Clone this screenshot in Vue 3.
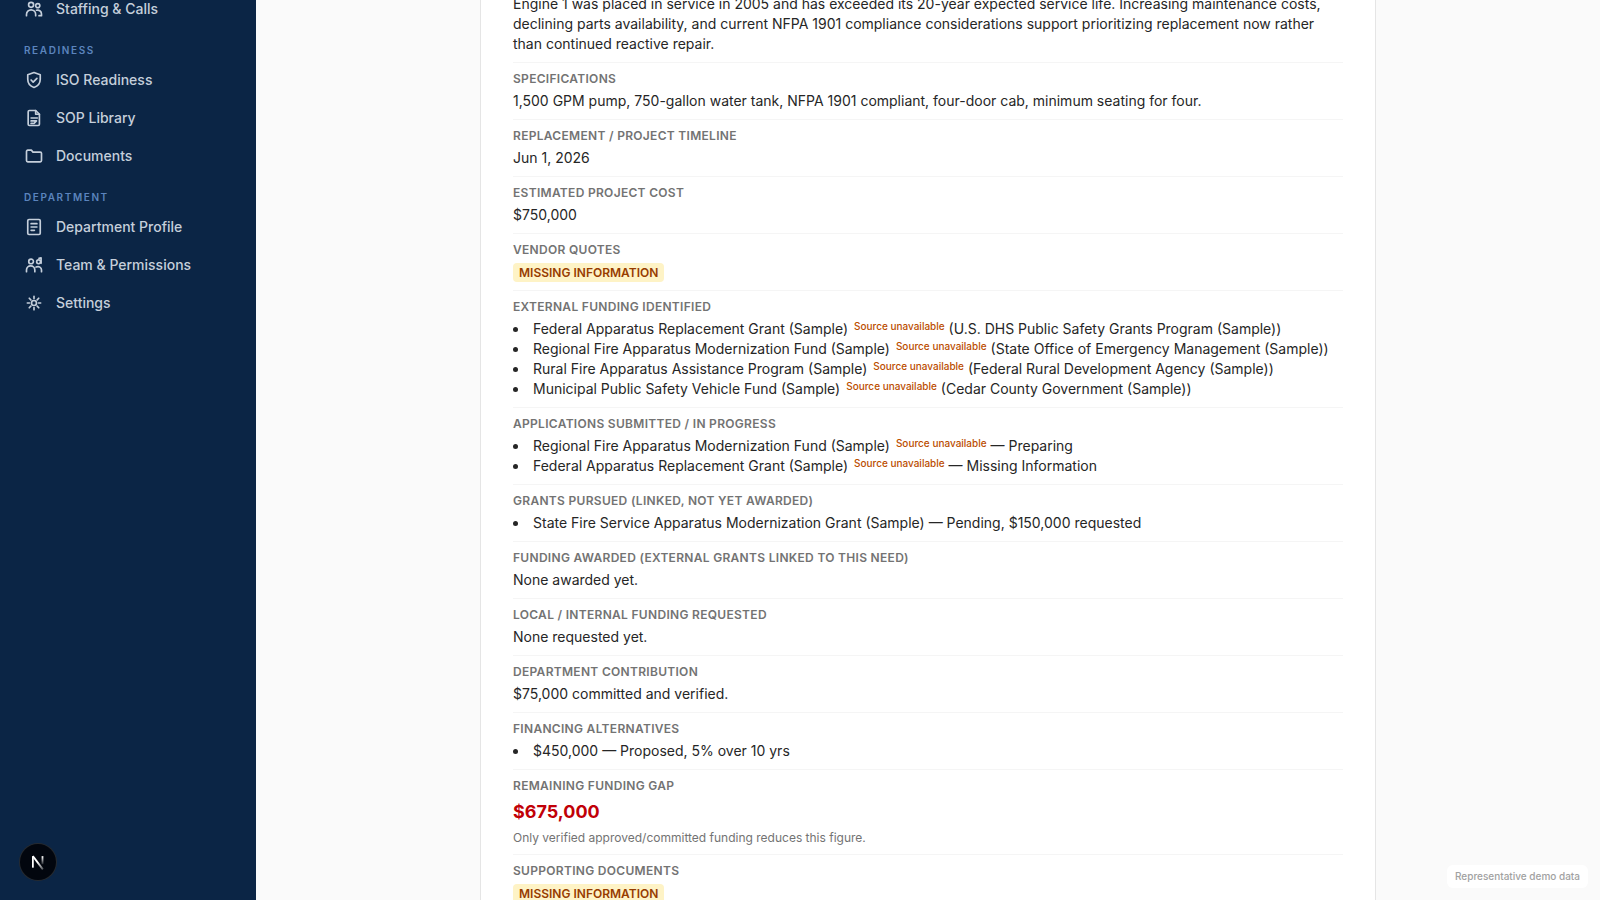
<template>
  <div class="shell">
    <aside class="sidebar">
      <nav class="nav">
        <div v-for="group in groups" :key="group.items[0].label" class="nav-group">
          <h2 v-if="group.title" class="nav-title">{{ group.title }}</h2>
          <a v-for="item in group.items" :key="item.label" href="#" class="nav-item">
            <svg class="nav-icon" viewBox="0 0 24 24" aria-hidden="true">
              <path v-for="d in item.icon" :key="d" :d="d" />
            </svg>
            <span>{{ item.label }}</span>
          </a>
        </div>
      </nav>
    </aside>

    <main class="main">
      <article class="report">
        <section v-for="(section, i) in sections" :key="i" class="section">
          <h3 v-if="section.title" class="section-title">{{ section.title }}</h3>
          <p v-if="section.text">{{ section.text }}</p>
          <p v-if="section.missing"><span class="missing">Missing Information</span></p>
          <ul v-if="section.list" class="list">
            <li v-for="row in section.list" :key="row.name">
              {{ row.name }}
              <sup v-if="row.unsourced" class="source">Source unavailable</sup>
              {{ row.detail }}
            </li>
          </ul>
          <p v-if="section.amount" class="amount">{{ section.amount }}</p>
          <p v-if="section.note" class="note">{{ section.note }}</p>
        </section>
      </article>
    </main>

    <button type="button" class="dev-button" aria-label="Open dev tools">
      <svg viewBox="0 0 40 40" aria-hidden="true">
        <defs>
          <linearGradient id="diagonal" x1="20" y1="20" x2="27" y2="29" gradientUnits="userSpaceOnUse">
            <stop stop-color="#fff" />
            <stop offset="1" stop-color="#fff" stop-opacity="0.2" />
          </linearGradient>
          <linearGradient id="stem" x1="26" y1="14" x2="26" y2="24" gradientUnits="userSpaceOnUse">
            <stop stop-color="#fff" />
            <stop offset="1" stop-color="#fff" stop-opacity="0" />
          </linearGradient>
        </defs>
        <path d="M14.3 26.3V13.5" stroke="#fff" />
        <path d="M14.3 13.5L25.4 28.2" stroke="url(#diagonal)" />
        <path d="M25 13.5V22.5" stroke="url(#stem)" />
      </svg>
    </button>
    <div class="demo-tag">Representative demo data</div>
  </div>
</template>

<script setup>
const groups = [
  {
    items: [
      {
        label: 'Staffing & Calls',
        icon: [
          'M8.5 10a3 3 0 1 0 0-6 3 3 0 0 0 0 6z',
          'M16.5 10.5a2.5 2.5 0 1 0 0-5 2.5 2.5 0 0 0 0 5z',
          'M3 20v-1.5a5.5 5.5 0 0 1 11 0V20',
          'M15 13.5c3.5-.6 6 1.5 6 4.5v2h-3',
        ],
      },
    ],
  },
  {
    title: 'Readiness',
    items: [
      {
        label: 'ISO Readiness',
        icon: ['M12 3l7.5 2.8v5.4c0 4.8-3 8.3-7.5 9.8-4.5-1.5-7.5-5-7.5-9.8V5.8z', 'M8.5 12l2.5 2.5 4.5-4.5'],
      },
      {
        label: 'SOP Library',
        icon: [
          'M6.5 3H14l4.5 4.5v12a1.5 1.5 0 0 1-1.5 1.5H6.5A1.5 1.5 0 0 1 5 19.5v-15A1.5 1.5 0 0 1 6.5 3z',
          'M14 3v4.5h4.5',
          'M8.5 12H16M8.5 15.5H15l-3 3M8.5 18.5h2',
        ],
      },
      {
        label: 'Documents',
        icon: ['M3 6.5A1.5 1.5 0 0 1 4.5 5h4.3l2 2.3h8.7A1.5 1.5 0 0 1 21 8.8v8.7a1.5 1.5 0 0 1-1.5 1.5h-15A1.5 1.5 0 0 1 3 17.5z'],
      },
    ],
  },
  {
    title: 'Department',
    items: [
      {
        label: 'Department Profile',
        icon: [
          'M6 3h12a1.5 1.5 0 0 1 1.5 1.5v15A1.5 1.5 0 0 1 18 21H6a1.5 1.5 0 0 1-1.5-1.5v-15A1.5 1.5 0 0 1 6 3z',
          'M8.5 8h7M8.5 12h7M8.5 16h4',
        ],
      },
      {
        label: 'Team & Permissions',
        icon: [
          'M8.5 10.5a2.8 2.8 0 1 0 0-5.6 2.8 2.8 0 0 0 0 5.6z',
          'M17.5 10.5a2.3 2.3 0 1 0 0-4.6 2.3 2.3 0 0 0 0 4.6z',
          'M3 20v-2a5 5 0 0 1 10 0v2',
          'M14.5 14.5c3.5-1.5 6.5.5 6.5 3.5v2',
          'M18 4l2.5-.5V10',
        ],
      },
      {
        label: 'Settings',
        icon: [
          'M12 15a3 3 0 1 0 0-6 3 3 0 0 0 0 6z',
          'M12 4v2.5M12 17.5V20M4 12h2.5M17.5 12H20M6.3 6.3l1.9 1.9M15.8 15.8l1.9 1.9M6.3 17.7l1.9-1.9M15.8 8.2l1.9-1.9',
        ],
      },
    ],
  },
]

const sections = [
  {
    text: 'Engine 1 was placed in service in 2005 and has exceeded its 20-year expected service life. Increasing maintenance costs, declining parts availability, and current NFPA 1901 compliance considerations support prioritizing replacement now rather than continued reactive repair.',
  },
  {
    title: 'Specifications',
    text: '1,500 GPM pump, 750-gallon water tank, NFPA 1901 compliant, four-door cab, minimum seating for four.',
  },
  { title: 'Replacement / Project Timeline', text: 'Jun 1, 2026' },
  { title: 'Estimated Project Cost', text: '$750,000' },
  { title: 'Vendor Quotes', missing: true },
  {
    title: 'External Funding Identified',
    list: [
      { name: 'Federal Apparatus Replacement Grant (Sample)', unsourced: true, detail: '(U.S. DHS Public Safety Grants Program (Sample))' },
      { name: 'Regional Fire Apparatus Modernization Fund (Sample)', unsourced: true, detail: '(State Office of Emergency Management (Sample))' },
      { name: 'Rural Fire Apparatus Assistance Program (Sample)', unsourced: true, detail: '(Federal Rural Development Agency (Sample))' },
      { name: 'Municipal Public Safety Vehicle Fund (Sample)', unsourced: true, detail: '(Cedar County Government (Sample))' },
    ],
  },
  {
    title: 'Applications Submitted / In Progress',
    list: [
      { name: 'Regional Fire Apparatus Modernization Fund (Sample)', unsourced: true, detail: '— Preparing' },
      { name: 'Federal Apparatus Replacement Grant (Sample)', unsourced: true, detail: '— Missing Information' },
    ],
  },
  {
    title: 'Grants Pursued (Linked, Not Yet Awarded)',
    list: [{ name: 'State Fire Service Apparatus Modernization Grant (Sample)', detail: '— Pending, $150,000 requested' }],
  },
  { title: 'Funding Awarded (External Grants Linked to This Need)', text: 'None awarded yet.' },
  { title: 'Local / Internal Funding Requested', text: 'None requested yet.' },
  { title: 'Department Contribution', text: '$75,000 committed and verified.' },
  { title: 'Financing Alternatives', list: [{ name: '$450,000', detail: '— Proposed, 5% over 10 yrs' }] },
  {
    title: 'Remaining Funding Gap',
    amount: '$675,000',
    note: 'Only verified approved/committed funding reduces this figure.',
  },
  { title: 'Supporting Documents', missing: true },
]
</script>

<style>
body {
  margin: 0;
  background: #fafafa;
}
</style>

<style scoped>
.shell {
  display: flex;
  height: 100vh;
  overflow: hidden;
  font-family: Inter, "Liberation Sans", sans-serif;
  font-size: 14px;
  line-height: 20px;
  color: #262626;
}
h2,
h3,
p,
ul {
  margin: 0;
}
.sidebar {
  flex: 0 0 256px;
  background: #0b2545;
}
/* both panes rest part-way down their content */
.nav {
  margin-top: -9px;
  padding: 0 12px;
}
.nav-group {
  display: flex;
  flex-direction: column;
  gap: 2px;
  margin-bottom: 16px;
}
.nav-title {
  padding: 0 12px;
  margin-bottom: 2px;
  font-size: 10px;
  line-height: 15px;
  font-weight: 600;
  letter-spacing: 0.16em;
  text-transform: uppercase;
  color: #5b84bd;
}
.nav-item {
  display: flex;
  align-items: center;
  gap: 12px;
  padding: 8px 12px;
  font-weight: 500;
  color: #c5cfdb;
  text-decoration: none;
}
.nav-icon {
  width: 20px;
  height: 20px;
  fill: none;
  stroke: currentColor;
  stroke-width: 2;
  stroke-linecap: round;
  stroke-linejoin: round;
}
.main {
  flex: 1;
  min-width: 0;
  padding: 0 32px;
}
.report {
  box-sizing: border-box;
  max-width: 896px;
  margin: -6px auto 0;
  padding: 0 32px 32px;
  background: #fff;
  border: solid #e5e5e5;
  border-width: 0 1px;
}
.section {
  padding: 8px 0;
  border-bottom: 1px solid #f5f5f5;
}
.section:first-child {
  padding-top: 0;
}
.section-title {
  margin-bottom: 4px;
  font-size: 12px;
  line-height: 16px;
  font-weight: 600;
  letter-spacing: 0.025em;
  text-transform: uppercase;
  color: #737373;
}
.missing {
  display: inline-block;
  padding: 2px 6px;
  border-radius: 4px;
  background: #fef3c6;
  font-size: 12px;
  line-height: 15px;
  font-weight: 600;
  text-transform: uppercase;
  color: #973c00;
}
.list {
  padding-left: 0;
  list-style: disc inside;
}
.source {
  margin-left: 2px;
  font-size: 10px;
  line-height: 0;
  font-weight: 500;
  vertical-align: 4px;
  color: #bb4d00;
}
.amount {
  font-size: 18px;
  line-height: 28px;
  font-weight: 700;
  color: #c10007;
}
.note {
  margin-top: 4px;
  font-size: 12px;
  line-height: 16px;
  color: #737373;
}
.dev-button {
  position: fixed;
  left: 20px;
  bottom: 20px;
  width: 36px;
  height: 36px;
  padding: 0;
  border: 0;
  border-radius: 50%;
  background: #02060e;
  box-shadow: 0 0 0 1px #262a2f;
}
.dev-button svg {
  display: block;
  width: 100%;
  height: 100%;
  fill: none;
  stroke-width: 2;
}
.demo-tag {
  position: fixed;
  right: 12px;
  bottom: 12px;
  padding: 4px 8px;
  border-radius: 6px;
  background: #fff;
  font-size: 10px;
  line-height: 15px;
  font-weight: 500;
  color: #a1a1a1;
}
</style>
